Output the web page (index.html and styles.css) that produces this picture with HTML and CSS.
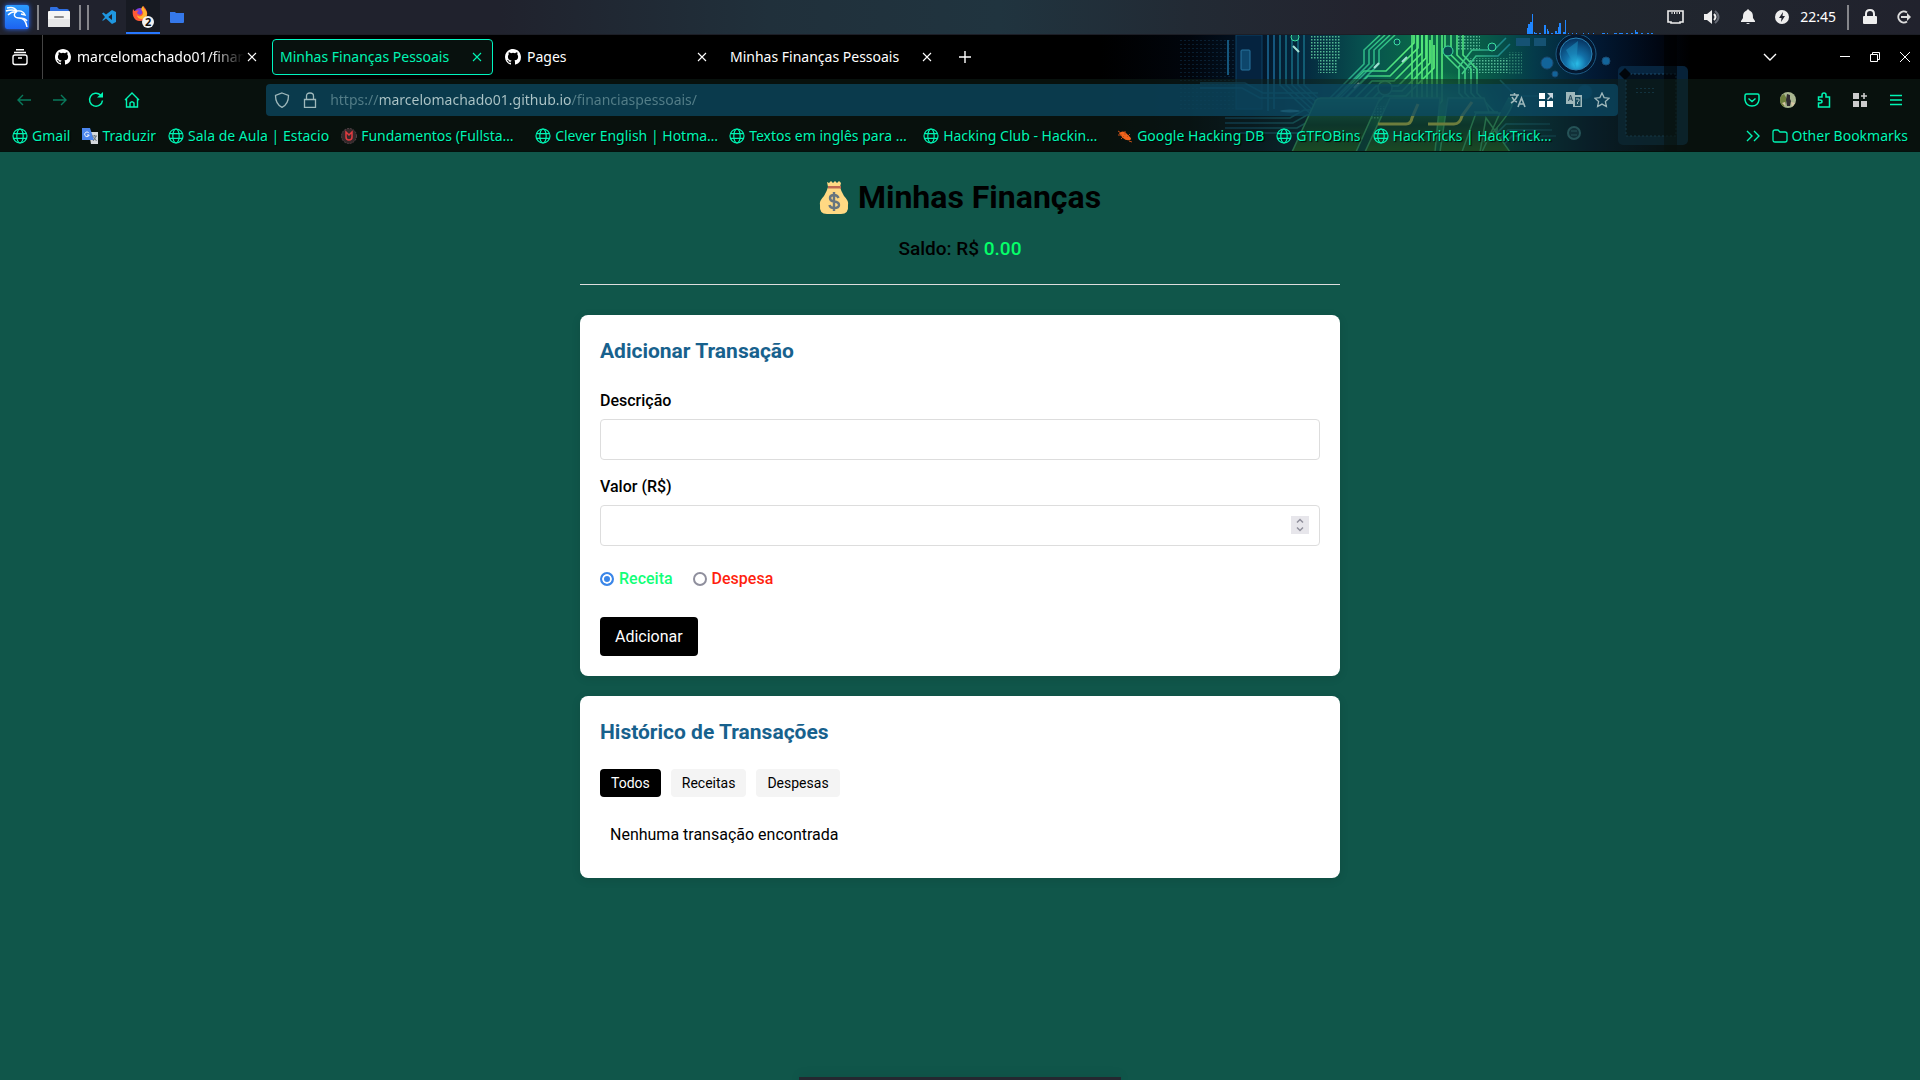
FILE: index.html
```html
<!DOCTYPE html>
<html lang="pt-BR">
<head>
<meta charset="utf-8">
<title>Minhas Finanças Pessoais</title>
<link rel="stylesheet" href="styles.css">
</head>
<body>
<svg class="defs" aria-hidden="true">
  <symbol id="github" viewBox="0 0 16 16"><path fill="currentColor" d="M8 0C3.58 0 0 3.58 0 8c0 3.54 2.29 6.53 5.47 7.59.4.07.55-.17.55-.38 0-.19-.01-.82-.01-1.49-2.01.37-2.53-.49-2.69-.94-.09-.23-.48-.94-.82-1.13-.28-.15-.68-.52-.01-.53.63-.01 1.08.58 1.23.82.72 1.21 1.87.87 2.33.66.07-.52.28-.87.51-1.07-1.78-.2-3.64-.89-3.64-3.95 0-.87.31-1.59.82-2.15-.08-.2-.36-1.02.08-2.12 0 0 .67-.21 2.2.82a7.6 7.6 0 0 1 4 0c1.53-1.04 2.2-.82 2.2-.82.44 1.1.16 1.92.08 2.12.51.56.82 1.27.82 2.15 0 3.07-1.87 3.75-3.65 3.95.29.25.54.73.54 1.48 0 1.07-.01 1.93-.01 2.2 0 .21.15.46.55.38A8.01 8.01 0 0 0 16 8c0-4.42-3.58-8-8-8z"/></symbol>
  <symbol id="close" viewBox="0 0 16 16"><path stroke="currentColor" stroke-width="1.1" d="M4 4l8 8M12 4l-8 8"/></symbol>
  <symbol id="globe" viewBox="0 0 16 16"><g fill="none" stroke="currentColor" stroke-width="1.2"><circle cx="8" cy="8" r="7"/><ellipse cx="8" cy="8" rx="3.2" ry="7"/><path d="M1.5 5.7h13M1.5 10.3h13"/></g></symbol>
</svg>

<header class="panel">
  <div class="panel-left">
    <button class="kali" aria-label="Menu"><svg width="24" height="24" viewBox="0 0 24 24"><path d="M2 3q7-2 10 3M1 6q6-2 11 0M3 10q4-4 9-3M12 6q6-1 8 4l-4-1M12 6c-5 4-2 7 2 7s7 3 8 9M14 13q6 0 8 3" fill="none" stroke="#fff" stroke-width="1.400"/></svg></button>
    <i class="rule"></i>
    <button class="files" aria-label="Arquivos"><svg width="22" height="20" viewBox="0 0 22 20"><path d="M2 1q0-1 1-1h6l2 2h8q2 0 2 2v3H2z" fill="#2f6fe0"/><path d="M0 5q0-1 1-1h20q1 0 1 1v14q0 1-1 1H1q-1 0-1-1z" fill="#f5f5f5"/><path d="M0 12h22v7q0 1-1 1H1q-1 0-1-1z" fill="#e6e6e8"/><rect x="6" y="9" width="10" height="2" rx="1" fill="#8c8c8f"/></svg></button>
    <i class="rule"></i><i class="rule"></i>
    <button class="task code" aria-label="Code"><svg width="14" height="14" viewBox="0 0 14 14"><path d="M10 0l4 2v10l-4 2-6-5.500-2.600 2L0 10.500 3 7 0 3.500l1.400-1L4 4.500zM10 4L6.300 7 10 10z" fill="#1f97e0"/></svg></button>
    <button class="task task-active" aria-label="Firefox"><svg width="22" height="24" viewBox="0 0 22 24"><circle cx="8" cy="10" r="6" fill="#7a3fe0"/><path d="M1 5c-1 5 0 11 6 12s9-5 8-9-3-4-3-6c-3 2-3 4-2 5 1 3-2 5-4 3-2-1 0-3 1-3-2-1-3 0-4 0S2 6 1 5z" fill="#ff5a36"/><path d="M11 2c-3 3-1 4 0 6 1 4-4 6-6 3 0 5 9 6 10-1 0-4-3-4-4-8z" fill="#ffb52e"/><circle cx="16" cy="18" r="6" fill="#f2f2f2"/><text x="13" y="22" class="count">2</text></svg></button>
    <button class="task" aria-label="Pasta"><svg width="14" height="12" viewBox="0 0 14 12"><path d="M0 1h5l1 1h8v9q0 1-1 1H1q-1 0-1-1z" fill="#3578ea"/></svg></button>
  </div>
  <div class="panel-right">
    <svg class="graph" width="128" height="22" viewBox="0 0 128 22"><path fill="#1f86ff" d="M0 22v-6h1v-4h2v-2h2v-8h1v20zM7 20h1v1h2v1H7zM12 21h2v1h-2zM17 22v-9h2v9zM20 22v-5h1v2h1v3zM24 21h2v1h-2zM28 22v-3h2v2h1v-6h1v-4h2v11zM36 20h2V8h1v14h-3zM41 21h1v1h-1zM45 21h1v1h-1zM49 21h1v1h-1zM56 21h1v1h-1zM61 21h1v1h-1zM66 21h1v1h-1zM75 21h3v1h-3zM80 21h1v1h-1zM87 21h3v1h-3zM92 21h4v1h-4zM99 21h2v1h-2zM104 21h2v1h-2zM108 22v-4h1v2h2v2zM114 21h2v1h-2zM120 21h2v1h-2zM124 21h2v1h-2z"/></svg>
    <svg width="17" height="16" viewBox="0 0 17 16"><path d="M1 2h15v11h-3v1H4v-1H1z" fill="none" stroke="#eee" stroke-width="1.600"/><path d="M5 3v2M7.500 3v2M10 3v2M12.500 3v2" stroke="#eee"/></svg>
    <svg width="18" height="16" viewBox="0 0 18 16"><path d="M1 5h3l5-4v14l-5-4H1z" fill="#eee"/><path d="M11 5q3 3 0 6" stroke="#eee" stroke-width="2" fill="none"/><path d="M12 2q7 6 0 12" stroke="#666b75" stroke-width="2" fill="none"/></svg>
    <svg width="16" height="16" viewBox="0 0 16 16"><path d="M8 0l1.500 1.500C13 3 13 6 13 9l2 3v1H1v-1l2-3c0-3 0-6 3.500-7.500zM6 14h4q-2 2-4 0z" fill="#eee"/></svg>
    <svg width="14" height="14" viewBox="0 0 14 14"><circle cx="7" cy="7" r="7" fill="#eee"/><path d="M8 2L4 8h2.500L6 12l4-6H7.500z" fill="#20222d"/></svg>
    <time>22:45</time>
    <i class="rule"></i>
    <svg width="14" height="16" viewBox="0 0 14 16"><rect x="0" y="7" width="14" height="8" rx="1" fill="#eee"/><path d="M3 7V5q0-4 4-4t4 4v2" fill="none" stroke="#eee" stroke-width="2"/></svg>
    <svg width="15" height="14" viewBox="0 0 15 14"><path d="M11 2.500A5.500 5.500 0 1 0 11 11.500" fill="none" stroke="#ddd" stroke-width="2"/><path d="M5 6h6V3l4 4-4 4V8H5z" fill="#ddd"/></svg>
  </div>
</header>

<section class="browser">
  <svg class="art" viewBox="1100 35 820 117" aria-hidden="true">
    <defs>
      <linearGradient id="board"><stop offset="0" stop-color="#000"/><stop offset=".11" stop-color="#01050c"/><stop offset=".19" stop-color="#031426"/><stop offset=".25" stop-color="#052a40"/><stop offset=".32" stop-color="#07504e"/><stop offset=".4" stop-color="#0a6c48"/><stop offset=".47" stop-color="#085a48"/><stop offset=".53" stop-color="#043a4a"/><stop offset=".6" stop-color="#021a35"/><stop offset=".68" stop-color="#010713"/><stop offset=".72" stop-color="#000"/></linearGradient>
      <linearGradient id="trace" gradientUnits="userSpaceOnUse" x1="1250" x2="1600" y1="0" y2="0"><stop offset="0" stop-color="#0e5278"/><stop offset=".22" stop-color="#1f8c8c"/><stop offset=".35" stop-color="#30c083"/><stop offset=".5" stop-color="#5ff57a"/><stop offset=".62" stop-color="#3cc987"/><stop offset=".75" stop-color="#15768a"/><stop offset="1" stop-color="#08314d"/></linearGradient>
      <linearGradient id="key" x2="0" y2="1"><stop offset="0" stop-color="#20906c"/><stop offset=".5" stop-color="#0a4a3c"/><stop offset="1" stop-color="#28702c"/></linearGradient>
      <radialGradient id="glow"><stop offset="0" stop-color="#5cff6a" stop-opacity=".7"/><stop offset="1" stop-color="#20c060" stop-opacity="0"/></radialGradient>
      <radialGradient id="knob" cx=".5" cy=".8" r=".8"><stop offset="0" stop-color="#2cc4ee"/><stop offset=".4" stop-color="#1270a8"/><stop offset="1" stop-color="#06305c"/></radialGradient>
      <pattern id="dots" width="3" height="3" patternUnits="userSpaceOnUse"><rect width="1.500" height="1.500" fill="#54b894"/></pattern>
      <pattern id="dim" width="4" height="4" patternUnits="userSpaceOnUse"><rect width="2" height="1" fill="#154263"/></pattern>
      <path id="ta" d="M1280 35v50l34 32v35"/>
      <path id="tb" d="M1328 112v-12l36-36v-14l16-15"/>
      <path id="tb2" d="M1346 116l30-30h22l28-28v-23"/>
      <path id="tc" d="M1412 35v66l-12 14v10"/>
      <path id="te" d="M1445 35v20l14 14v24l20 22v37"/>
    </defs>
    <rect x="1100" y="35" width="820" height="117" fill="url(#board)"/>
    <rect x="1180" y="40" width="56" height="70" fill="url(#dim)" opacity=".4"/>
    <rect x="1236" y="35" width="26" height="74" fill="#05233f" stroke="#0d4267"/>
    <rect x="1241" y="50" width="9" height="20" rx="1" fill="#0d466b" stroke="#2875a0"/>
    <path d="M1268 35v76M1274 35v74M1228 40v35" stroke="#15567d" stroke-width="2"/>
    <ellipse cx="1290" cy="111" rx="10" ry="1.500" fill="#64c7e6"/>
    <rect x="1310" y="35" width="30" height="24" fill="url(#dots)"/><rect x="1318" y="59" width="20" height="14" fill="url(#dots)"/>
    <rect x="1362" y="106" width="38" height="14" fill="url(#dots)"/>
    <rect x="1458" y="36" width="22" height="14" fill="url(#dots)"/><rect x="1468" y="58" width="40" height="15" fill="url(#dots)"/><rect x="1508" y="52" width="14" height="22" fill="url(#dots)" opacity=".5"/>
    <g fill="none" stroke="url(#trace)" stroke-width="1.600">
      <use href="#ta"/><use href="#ta" x="6"/><use href="#ta" x="12"/><use href="#ta" x="18"/><use href="#ta" x="24"/>
      <use href="#tb"/><use href="#tb" x="5"/><use href="#tb" x="10"/><use href="#tb" x="15"/>
      <use href="#tb2"/><use href="#tb2" x="-4" y="-5"/><use href="#tb2" x="-8" y="-10"/><use href="#tb2" x="-12" y="-15"/><use href="#tb2" x="4" y="5"/><use href="#tb2" x="8" y="10"/>
      <use href="#tc"/><use href="#tc" x="5"/><use href="#tc" x="10"/><use href="#tc" x="15"/><use href="#tc" x="20"/><use href="#tc" x="25"/><use href="#tc" x="30"/>
      <use href="#te"/><use href="#te" x="6"/><use href="#te" x="12"/><use href="#te" x="18"/>
      <path d="M1200 83h45l18 10h55M1200 88h42l18 10h55M1225 118h65l14-8h20M1225 123h68l14-8h20M1225 128h72l14-8h20M1240 133h60l14-8h20M1480 150l26-26h44M1488 150l20-20h44M1498 150l14-14h44"/>
      <path d="M1458 68l14-18h22l12-12M1462 74l14-18h22l12-12M1500 80l16 16h40"/>
    </g>
    <ellipse cx="1425" cy="108" rx="80" ry="38" fill="url(#glow)"/>
    <g stroke="#3cb878" stroke-width="1.500" fill="url(#key)">
      <path d="M1316 100q2-2 5-2h59l-24 54h-64zM1390 98h50l-5 54h-70zM1448 98h36l8 22-22 32h-30z"/>
      <path d="M1378 124h28q5 0 6-6l6-14M1428 124h26q6 0 8-8l10-14" fill="none" stroke="#c9d860" stroke-width="3"/>
      <path d="M1476 113h24l-18 39h-20zM1474 112h24M1484 142q40-42 24-44M1486 118l24 34h-30z"/>
      <circle cx="1385" cy="88" r="7"/>
    </g>
    <g stroke="#3de0a0" fill="#0a4d52"><circle cx="1448" cy="51" r="5"/><circle cx="1492" cy="47" r="4"/><circle cx="1397" cy="42" r="3"/><circle cx="1295" cy="37" r="4"/></g>
    <path d="M1293 46l6 6M1354 88l5-5M1374 68l5-5M1402 62l5-5" stroke="#a4e0d4" stroke-width="2"/>
    <g fill="#155273"><path d="M1516 38h14v8h-14zM1534 38h12v8h-12z"/></g>
    <circle cx="1576" cy="54" r="20" fill="#041830" stroke="#1d5a84" stroke-width="1"/><circle cx="1576" cy="54" r="16" fill="url(#knob)" stroke="#2c83b5"/><path d="M1576 68l-10-18 12-9z" fill="#1e93c4" opacity=".5"/>
    <g fill="#12649a" stroke="#1b4a70"><circle cx="1547" cy="63" r="6"/><circle cx="1555" cy="74" r="3"/><circle cx="1606" cy="61" r="4"/><circle cx="1585" cy="92" r="7" opacity=".6"/></g>
    <circle cx="1574" cy="133" r="6" fill="#123f56" stroke="#3b8495" stroke-width="2"/><path d="M1571 131h6M1571 135h6" stroke="#3b8495"/>
    <rect x="1618" y="66" width="70" height="79" rx="5" fill="#0a3050" opacity=".7"/><path d="M1626 74h50v62h-50z" fill="#03101e" stroke="#1b4c6e" stroke-dasharray="2 2"/><path d="M1625 68l6 6-6 6-6-6z" fill="#01050a"/>
    <rect x="1634" y="85" width="20" height="8" fill="url(#dim)"/>
    <rect x="1664" y="35" width="13" height="117" fill="#000" opacity=".6"/>
  </svg>

  <div class="tabs">
    <button class="archive" aria-label="Abas"><svg width="18" height="18" viewBox="0 0 18 18"><g fill="none" stroke="#fff" stroke-width="1.400"><rect x="2" y="7" width="14" height="9.500" rx="2"/><path d="M3 4.500h12M5 1.800h8M7 10h4"/></g></svg></button>
    <div class="tab"><svg class="favicon" width="16" height="16"><use href="#github"/></svg><span class="fade">marcelomachado01/finan</span><button aria-label="Fechar"><svg width="16" height="16"><use href="#close"/></svg></button></div>
    <div class="tab tab-active"><span>Minhas Finanças Pessoais</span><button aria-label="Fechar"><svg width="16" height="16"><use href="#close"/></svg></button></div>
    <div class="tab"><svg class="favicon" width="16" height="16"><use href="#github"/></svg><span>Pages</span><button aria-label="Fechar"><svg width="16" height="16"><use href="#close"/></svg></button></div>
    <div class="tab"><span>Minhas Finanças Pessoais</span><button aria-label="Fechar"><svg width="16" height="16"><use href="#close"/></svg></button></div>
    <button class="tool" aria-label="Nova aba"><svg width="16" height="16" viewBox="0 0 16 16"><path d="M8 2v12M2 8h12" stroke="#fff" stroke-width="1.400"/></svg></button>
    <div class="window">
      <button class="list" aria-label="Listar abas"><svg width="16" height="16" viewBox="0 0 16 16"><path d="M2 5l6 6 6-6" fill="none" stroke="#fff" stroke-width="1.400"/></svg></button>
      <button aria-label="Minimizar"><svg width="12" height="12" viewBox="0 0 12 12"><path d="M1 5.500h10" stroke="#fff"/></svg></button>
      <button aria-label="Restaurar"><svg width="12" height="12" viewBox="0 0 12 12"><path d="M1.500 3.500h7v7h-7zM3.500 3.500v-2h7v7h-2" fill="none" stroke="#fff"/></svg></button>
      <button aria-label="Fechar janela"><svg width="12" height="12" viewBox="0 0 12 12"><path d="M1 1l10 10M11 1L1 11" stroke="#fff"/></svg></button>
    </div>
  </div>

  <div class="toolbar">
    <nav class="nav">
      <button class="tool off" aria-label="Voltar"><svg width="16" height="16" viewBox="0 0 16 16"><path d="M15 8H2M7 3L2 8l5 5" fill="none" stroke="currentColor" stroke-width="1.400"/></svg></button>
      <button class="tool off" aria-label="Avançar"><svg width="16" height="16" viewBox="0 0 16 16"><path d="M1 8h13M9 3l5 5-5 5" fill="none" stroke="currentColor" stroke-width="1.400"/></svg></button>
      <button class="tool" aria-label="Recarregar"><svg width="16" height="16" viewBox="0 0 16 16"><path d="M12.500 3A6.500 6.500 0 1 0 14.500 8.500" fill="none" stroke="currentColor" stroke-width="1.500"/><path d="M9 5.500h6V0z" fill="currentColor"/></svg></button>
      <button class="tool" aria-label="Início"><svg width="16" height="16" viewBox="0 0 16 16"><path d="M1 8l7-7 7 7M2.500 6.500V15h11V6.500M6 15v-4q2-2.500 4 0v4" fill="none" stroke="currentColor" stroke-width="1.400"/></svg></button>
      <i class="spring"></i>
      <div class="url">
        <svg width="16" height="16" viewBox="0 0 16 16"><path d="M8 1l6.500 2.500C14.500 9 13 13 8 15.300 3 13 1.500 9 1.500 3.500z" fill="none" stroke="currentColor" stroke-width="1.300"/></svg>
        <svg width="16" height="16" viewBox="0 0 16 16"><path d="M2.500 7.500h11v7.800h-11zM4.500 7.500V4q0-3 3.500-3t3.500 3v3.500" fill="none" stroke="currentColor" stroke-width="1.300"/></svg>
        <input class="address" type="text" aria-label="Endereço" value="https://marcelomachado01.github.io/financiaspessoais/">
        <svg width="16" height="16" viewBox="0 0 16 16"><path d="M0 3h9M4.500 1v2M7.500 3Q6 8 1 11M2 5q2 4 5 5M8 15l3.500-9L15 15M9 12h5" fill="none" stroke="currentColor" stroke-width="1.600"/></svg>
        <svg width="16" height="16" viewBox="0 0 16 16"><path d="M1 1h6v6H1zM1 9h6v6H1zM9 9h6v6H9z" fill="#fff"/><path d="M9 1h6v6l-2-2-3 3-1-1 3-3z" fill="#c8d4dc"/></svg>
        <svg width="16" height="16" viewBox="0 0 16 16"><path d="M0 0h9v3h7v12H7v-3H0z" fill="currentColor"/><path d="M2.500 9l2-6 2 6M3 7h3" stroke="#24495a" fill="none"/><path d="M9 5h5.500v9H9z" fill="#174a5c"/><path d="M10 7h3v2l-1.500 1v2" stroke="currentColor" fill="none"/></svg>
        <svg width="16" height="16" viewBox="0 0 16 16"><path d="M8 1l2.100 4.600 5 .6-3.700 3.400 1 5L8 12.100l-4.400 2.500 1-5L.9 6.200l5-.6z" fill="none" stroke="currentColor" stroke-width="1.300"/></svg>
      </div>
      <i class="spring"></i>
      <button class="tool" aria-label="Pocket"><svg width="16" height="16" viewBox="0 0 16 16"><path d="M2.500 2h11q1.500 0 1.500 1.500V8q-1 6-7 6T1 8V3.500Q1 2 2.500 2zM4.500 6.500L8 9.500l3.500-3" fill="none" stroke="currentColor" stroke-width="1.500"/></svg></button>
      <button class="tool" aria-label="Conta"><svg width="16" height="16" viewBox="0 0 16 16"><circle cx="8" cy="8" r="8" fill="#a9b690"/><path d="M0 8a8 8 0 0 0 4 7l3-8-3-5Q0 4 0 8z" fill="#6d7f3c"/><path d="M7 2l3 1v4l1 2-1 5H7l-1-6z" fill="#2e2b30"/><path d="M11 10l4 1-3 4zM2 11l3-1v4z" fill="#d8c7a4"/></svg></button>
      <button class="tool" aria-label="Extensões"><svg width="16" height="16" viewBox="0 0 16 16"><path d="M6 5V3q0-2 2-2t2 2v2h3.500v10H2.500v-4H4q2 0 2-1.500T4 8H2.500V5z" fill="none" stroke="currentColor" stroke-width="1.500"/></svg></button>
      <button class="tool" aria-label="Aplicativos"><svg width="16" height="16" viewBox="0 0 16 16"><path d="M1 1h6v6H1zM1 9h6v6H1zM9 9h6v6H9zM11.200 1h1.600v2.200H15v1.600h-2.200V7h-1.600V4.800H9V3.200h2.200z" fill="#ccc"/></svg></button>
      <button class="tool" aria-label="Menu"><svg width="16" height="16" viewBox="0 0 16 16"><path d="M2 3.500h12M2 8h12M2 12.500h12" stroke="currentColor" stroke-width="1.400"/></svg></button>
    </nav>

    <nav class="bookmarks">
      <a href="#"><svg width="16" height="16"><use href="#globe"/></svg><span>Gmail</span></a>
      <a href="#"><svg width="16" height="16" viewBox="0 0 16 16"><path d="M7 4h9v12H9z" fill="#d4d8dc"/><path d="M0 0h8l4 12H0z" fill="#4b86ee"/><path d="M7 5.200A2.300 2.300 0 1 0 7.200 7H5" fill="none" stroke="#fff"/><path d="M10 8h5M12.500 7v1M14 8q-1 3-3 5M11.500 9l3 4" stroke="#6a7680" fill="none"/></svg><span>Traduzir</span></a>
      <a href="#"><svg width="16" height="16"><use href="#globe"/></svg><span>Sala de Aula | Estacio</span></a>
      <a href="#"><svg width="16" height="16" viewBox="0 0 16 16"><circle cx="8" cy="8" r="7.500" fill="#34282a" stroke="#55454a" stroke-dasharray="2 1"/><path d="M5 4v5q0 3 3 3t3-3V4L8 7z" fill="none" stroke="#e23b40" stroke-width="1.500"/></svg><span class="long">Fundamentos (Fullsta…</span></a>
      <a href="#"><svg width="16" height="16"><use href="#globe"/></svg><span class="long">Clever English | Hotma…</span></a>
      <a href="#"><svg width="16" height="16"><use href="#globe"/></svg><span class="long">Textos em inglês para …</span></a>
      <a href="#"><svg width="16" height="16"><use href="#globe"/></svg><span class="long">Hacking Club - Hackin…</span></a>
      <a href="#"><svg width="16" height="16" viewBox="0 0 16 16"><path d="M2 5q4-3 7 0l4 4q2 2 0 3-4 1-7-2T2 5z" fill="#f2641c"/><path d="M1 7h4M4 11l3-3M8 3v4M13 6l-3 3M12 13l3 1M1 3l3 2" stroke="#c34d14"/></svg><span>Google Hacking DB</span></a>
      <a href="#"><svg width="16" height="16"><use href="#globe"/></svg><span>GTFOBins</span></a>
      <a href="#"><svg width="16" height="16"><use href="#globe"/></svg><span class="long">HackTricks | HackTrick…</span></a>
      <button class="more" aria-label="Mais favoritos"><svg width="14" height="14" viewBox="0 0 14 14"><path d="M1 2l5 5-5 5M8 2l5 5-5 5" fill="none" stroke="currentColor" stroke-width="1.400"/></svg></button>
      <a class="others" href="#"><svg width="16" height="16" viewBox="0 0 16 16"><path d="M1 4q0-2 2-2h3l2 2h5q2 0 2 2v6q0 2-2 2H3q-2 0-2-2z" fill="none" stroke="currentColor" stroke-width="1.300"/></svg><span>Other Bookmarks</span></a>
    </nav>
  </div>
</section>

<main class="page">
  <header class="summary">
    <h1><svg width="30" height="34" viewBox="0 0 30 34" aria-hidden="true"><path d="M8 1l2 1 2-2 2 2 2-2 2 2 2-2 2 2-1 4q1 4 4 9 5 5 4 9 1 9-7 9H8Q0 33 1 24q-1-4 4-9 3-5 4-9z" fill="#ffd983"/><path d="M9 5h13v2.500H9z" fill="#bf6952"/><path d="M19.500 17q-1-3-4.500-3-4 0-4 3t4 3.500q5 .5 5 3.500t-5 3q-4 0-4.500-3M15 11v19" fill="none" stroke="#67757f" stroke-width="2.400"/></svg>Minhas Finanças</h1>
    <p>Saldo: R$ <span class="amount">0.00</span></p>
  </header>

  <section class="card">
    <h2>Adicionar Transação</h2>
    <form>
      <label for="descricao">Descrição</label>
      <input class="field" id="descricao" type="text">
      <label for="valor">Valor (R$)</label>
      <input class="field" id="valor" type="number" step="0.01">
      <div class="kinds">
        <label class="income"><input type="radio" name="tipo" checked>Receita</label>
        <label class="expense"><input type="radio" name="tipo">Despesa</label>
      </div>
      <button class="add" type="button">Adicionar</button>
    </form>
  </section>

  <section class="card">
    <h2>Histórico de Transações</h2>
    <div class="filters">
      <button class="selected">Todos</button>
      <button>Receitas</button>
      <button>Despesas</button>
    </div>
    <p class="empty">Nenhuma transação encontrada</p>
  </section>
</main>
<div class="dock"></div>
</body>
</html>
```

FILE: styles.css
```css
* { box-sizing: border-box; }

body {
  margin: 0;
  min-height: 100vh;
  display: flex;
  flex-direction: column;
  background: #10564a;
  color: #000;
  font: 16px/26px Roboto, "Liberation Sans", sans-serif;
}

h1, h2, p { margin: 0; }
button { font: inherit; color: inherit; border: 0; background: none; padding: 0; cursor: pointer; }
svg { display: block; flex: none; }
.defs { position: absolute; width: 0; height: 0; }

/* desktop panel */
.panel {
  display: flex;
  justify-content: space-between;
  height: 35px;
  border-bottom: 1px solid #1c1e26;
  background: linear-gradient(90deg, #20222d 0, #20222d 26%, #20303b 40%, #20343f 52%, #222a34 62%, #23232e 72%, #20272f 82%, #21222d 100%);
  color: #fff;
  font: 14px/34px "Noto Sans", sans-serif;
}
.panel-left, .panel-right { display: flex; align-items: center; }
.panel-left { padding-left: 5px; }
.rule { width: 2px; height: 25px; background: #85868b; }
.kali { width: 24px; height: 24px; margin-right: 8px; border-radius: 2px; background: linear-gradient(#2b9bff, #1d63f0); box-shadow: 0 0 5px #2b6cff; }
.files { margin: 0 9px; }
.rule + .rule { margin-left: 6px; }
.task { width: 34px; height: 34px; display: grid; place-items: center; }
.code { margin-left: 3px; }
.task-active { background: #171a22; border-bottom: 2px solid #2777ff; }
.count { font: 700 11px "Noto Sans", sans-serif; fill: #111; }
.panel-right { gap: 19px; padding-right: 9px; }
.graph { align-self: flex-end; margin-right: -7px; }
.panel-right time { margin: 0 -8px; }
.panel-right .rule { margin-right: -5px; }

/* browser chrome */
.browser {
  position: relative;
  background: #000;
  border-bottom: 1px solid #04100c;
  font: 14px/20px "Noto Sans", sans-serif;
  color: #fff;
  overflow: hidden;
}
.art { position: absolute; top: 0; right: 0; width: 820px; height: 117px; }
.tabs, .toolbar { position: relative; }
.tabs { display: flex; height: 44px; align-items: center; }
.archive { width: 43px; height: 44px; padding-left: 11px; border-right: 1px solid #444; margin-right: 4px; }
.tab {
  flex: 0 1 221px;
  min-width: 0;
  height: 36px;
  margin-right: 4px;
  padding: 0 7px;
  display: flex;
  align-items: center;
  border: 1px solid transparent;
  border-radius: 4px;
}
.favicon { margin-right: 6px; }
.tab span { flex: 1; min-width: 0; white-space: nowrap; }
.tab .fade { mask-image: linear-gradient(90deg, #000 80%, transparent); }
.tab-active { background: #08110e; border-color: #00f5c0; color: #00f5b4; }
.tool { width: 36px; height: 32px; display: grid; place-items: center; }
.window { margin-left: auto; display: flex; gap: 18px; padding-right: 9px; align-items: center; }
.list { margin-right: 43px; }

.toolbar { background: rgba(16, 34, 26, .5); color: #00f5b4; }
.nav { display: flex; align-items: center; height: 42px; padding: 0 6px; }
.off { color: #087a5c; }
.spring { flex: 1; }
.url {
  flex: 11.5;
  height: 32px;
  display: flex;
  align-items: center;
  gap: 12px;
  padding: 0 8px;
  border-radius: 4px;
  background: rgba(12, 76, 104, .7);
  color: #9fb8bb;
}
.address {
  flex: 1;
  min-width: 0;
  padding: 0;
  border: 0;
  font: inherit;
  color: transparent;
  background: linear-gradient(90deg, #547e88 50px, #afc6c8 50px, #afc6c8 241px, #547e88 241px);
  background-clip: text;
  -webkit-background-clip: text;
}

.bookmarks { display: flex; align-items: center; gap: 12px; height: 30px; padding: 0 12px; }
.bookmarks a { display: flex; align-items: center; gap: 4px; color: inherit; text-decoration: none; text-shadow: 1px 1px 1px #000; }
.bookmarks span { white-space: nowrap; }
.bookmarks .long { width: 162px; }
.more { margin-left: auto; }

/* finance page */
.page { width: 100%; max-width: 800px; margin: 0 auto; padding: 20px; }
.summary { padding-bottom: 20px; margin-bottom: 30px; border-bottom: 1px solid #ddd; text-align: center; }
h1 { display: flex; justify-content: center; align-items: center; gap: 9px; margin-bottom: 10px; font-size: 32px; line-height: 51px; font-weight: 700; }
.summary p { font-size: 19px; line-height: 31px; font-weight: 500; }
.amount { color: #05ff69; }
.card { margin-bottom: 20px; padding: 20px; border-radius: 8px; background: #fff; box-shadow: 0 2px 10px rgba(0, 0, 0, .1); }
h2 { margin-bottom: 20px; font-size: 21px; line-height: 33px; font-weight: 700; color: #17618d; }
form > label { display: block; margin-bottom: 5px; font-weight: 500; }
.field { display: block; width: 100%; height: 41px; margin-bottom: 14px; padding: 10px; border: 1px solid #ddd; border-radius: 4px; font: inherit; }
.field::-webkit-inner-spin-button {
  appearance: none;
  opacity: 1;
  width: 18px;
  height: 18px;
  background: #e7e6eb url("data:image/svg+xml,%3Csvg xmlns='http://www.w3.org/2000/svg' width='18' height='18'%3E%3Cpath d='M6 6.500l3-3 3 3M6 11.500l3 3 3-3' fill='none' stroke='%238f8e9b' stroke-width='1.500'/%3E%3C/svg%3E") center no-repeat;
}
.kinds { display: flex; gap: 20px; margin: 20px 0 25px; font-weight: 500; }
.kinds label { display: flex; align-items: center; gap: 5px; }
.kinds input { appearance: none; width: 14px; height: 14px; margin: 0; border: 2px solid #8f8f9d; border-radius: 50%; }
.kinds input:checked { border-color: #3a86e8; background: #3a86e8; box-shadow: inset 0 0 0 2px #fff; }
.income { color: #12ff78; }
.expense { color: #ff1f0f; }
.add { display: block; height: 39px; padding: 0 15px; border-radius: 4px; background: #000; color: #fff; }
.filters { display: flex; gap: 10px; margin-bottom: 15px; }
.filters button { height: 28px; padding: 0 11px; border-radius: 4px; background: #f4f4f4; font-size: 14px; line-height: 28px; }
.filters .selected { background: #000; color: #fff; }
.empty { padding: 10px; }
.dock { position: fixed; bottom: 0; left: 50%; width: 322px; height: 3px; margin-left: -161px; background: #242830; box-shadow: 0 0 12px rgba(0, 0, 0, .15); }
```
